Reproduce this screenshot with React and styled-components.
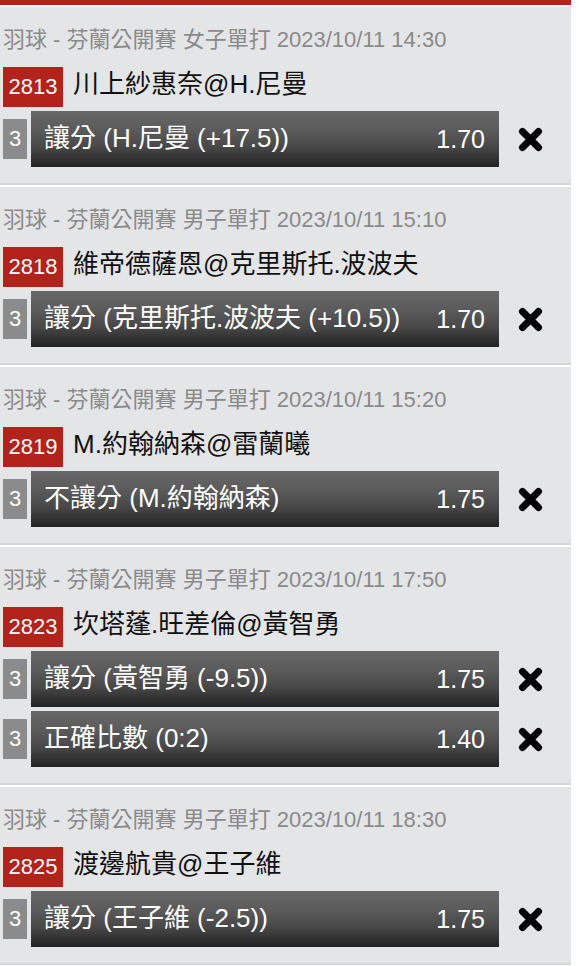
import React from "react";
import styled, { createGlobalStyle } from "styled-components";

const Global = createGlobalStyle`
  html, body { margin: 0; padding: 0; background: #ffffff; }
  body { font-family: "Liberation Sans", "Noto Sans CJK TC", sans-serif; }
`;

const Page = styled.div`
  width: 571px;
  display: flex;
  flex-direction: column;
`;

const TopBar = styled.div`
  height: 5px;
  background: #b3221b;
`;

const Card = styled.section`
  margin-top: 2px;
  background: #e4e5e7;
  border-bottom: 2px solid #d4d5d7;
  padding: 0 0 16px 3px;
  display: flex;
  flex-direction: column;
`;

const Header = styled.div`
  height: 60px;
  padding-top: 5px;
  box-sizing: border-box;
  display: flex;
  align-items: center;
  font-size: 22px;
  line-height: 1;
  color: #8a8a8a;
  white-space: nowrap;
`;

const MatchRow = styled.div`
  display: flex;
  align-items: center;
  height: 40px;
  gap: 10px;
  margin-bottom: 4px;
`;

const Badge = styled.div`
  width: 60px;
  height: 40px;
  background: #b3221b;
  color: #ffffff;
  font-size: 22px;
  display: flex;
  align-items: center;
  justify-content: center;
`;

const MatchTitle = styled.div`
  font-size: 26px;
  line-height: 1;
  color: #111111;
  white-space: nowrap;
  margin-top: -6px;
`;

const Bets = styled.div`
  display: flex;
  flex-direction: column;
  gap: 4px;
`;

const BetRow = styled.div`
  display: flex;
  align-items: center;
  height: 56px;
`;

const Num = styled.div`
  width: 24px;
  height: 40px;
  background: #8b8b8b;
  color: #ffffff;
  font-size: 22px;
  display: flex;
  align-items: center;
  justify-content: center;
  margin-right: 4px;
`;

const BetBar = styled.div`
  width: 468px;
  height: 56px;
  box-sizing: border-box;
  padding: 0 14px 0 13px;
  display: flex;
  align-items: center;
  justify-content: space-between;
  background: linear-gradient(#686868 0%, #5a5a5a 35%, #474747 65%, #222222 100%);
  color: #ffffff;
  font-size: 26px;
  line-height: 1;
  white-space: nowrap;
`;

const Label = styled.span`
  margin-top: -2px;
`;

const Odds = styled.span`
  font-size: 25px;
`;

const Remove = styled.div`
  width: 72px;
  display: flex;
  align-items: center;
  padding-left: 19px;
  box-sizing: border-box;
`;

const XIcon = () => (
  <svg width="25" height="25" viewBox="0 0 25 25">
    <path d="M4.5 4.5 L20.5 20.5 M20.5 4.5 L4.5 20.5" stroke="#000" strokeWidth="7" strokeLinecap="round" />
  </svg>
);

const data = [
  {
    head: "羽球 - 芬蘭公開賽 女子單打 2023/10/11 14:30",
    id: "2813",
    title: "川上紗惠奈@H.尼曼",
    bets: [["讓分 (H.尼曼 (+17.5))", "1.70"]],
  },
  {
    head: "羽球 - 芬蘭公開賽 男子單打 2023/10/11 15:10",
    id: "2818",
    title: "維帝德薩恩@克里斯托.波波夫",
    bets: [["讓分 (克里斯托.波波夫 (+10.5))", "1.70"]],
  },
  {
    head: "羽球 - 芬蘭公開賽 男子單打 2023/10/11 15:20",
    id: "2819",
    title: "M.約翰納森@雷蘭曦",
    bets: [["不讓分 (M.約翰納森)", "1.75"]],
  },
  {
    head: "羽球 - 芬蘭公開賽 男子單打 2023/10/11 17:50",
    id: "2823",
    title: "坎塔蓬.旺差倫@黃智勇",
    bets: [
      ["讓分 (黃智勇 (-9.5))", "1.75"],
      ["正確比數 (0:2)", "1.40"],
    ],
  },
  {
    head: "羽球 - 芬蘭公開賽 男子單打 2023/10/11 18:30",
    id: "2825",
    title: "渡邊航貴@王子維",
    bets: [["讓分 (王子維 (-2.5))", "1.75"]],
  },
];

export default function App() {
  return (
    <>
      <Global />
      <Page>
        <TopBar />
        {data.map((m) => (
          <Card key={m.id}>
            <Header>{m.head}</Header>
            <MatchRow>
              <Badge>{m.id}</Badge>
              <MatchTitle>{m.title}</MatchTitle>
            </MatchRow>
            <Bets>
              {m.bets.map(([label, odds]) => (
                <BetRow key={label}>
                  <Num>3</Num>
                  <BetBar>
                    <Label>{label}</Label>
                    <Odds>{odds}</Odds>
                  </BetBar>
                  <Remove>
                    <XIcon />
                  </Remove>
                </BetRow>
              ))}
            </Bets>
          </Card>
        ))}
      </Page>
    </>
  );
}
